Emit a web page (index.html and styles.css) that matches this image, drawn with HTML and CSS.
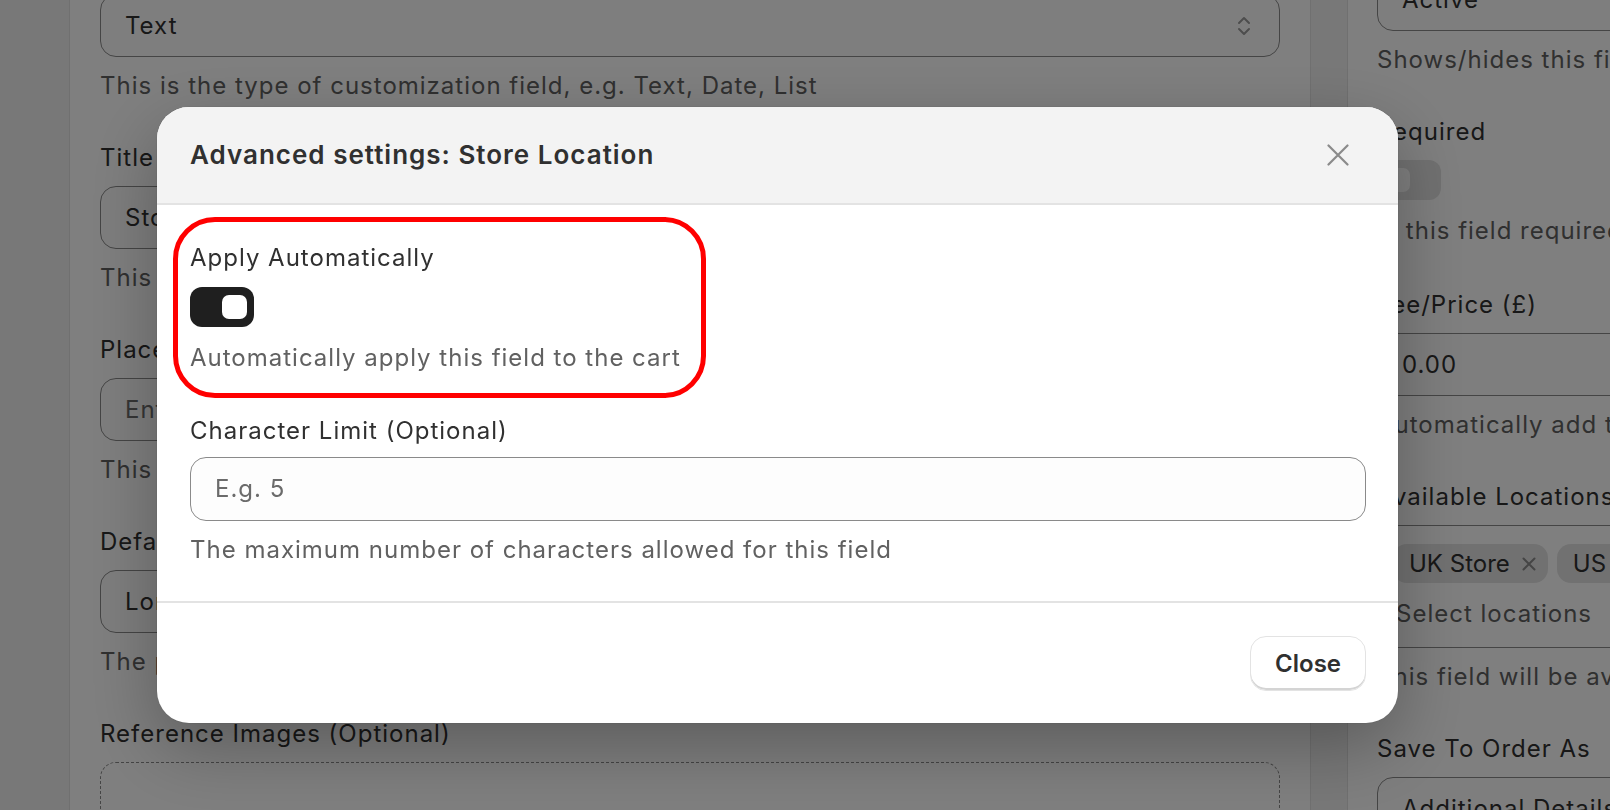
FILE: index.html
```html
<!DOCTYPE html>
<html lang="en">
<head>
<meta charset="utf-8">
<title>Advanced settings: Store Location</title>
<link rel="stylesheet" href="styles.css">
</head>
<body>
<div class="page">
  <section class="card card-main">
    <div class="field">
      <div class="label">Field Type</div>
      <div class="control select"><span>Text</span>
        <svg class="chev" width="16" height="24" viewBox="0 0 16 24"><path d="M3 9 L8 4 L13 9 M3 15 L8 20 L13 15" fill="none" stroke="#9a9a9a" stroke-width="2" stroke-linecap="round" stroke-linejoin="round"/></svg>
      </div>
      <div class="help">This is the type of customization field, e.g. Text, Date, List</div>
    </div>
    <div class="field">
      <div class="label">Title</div>
      <div class="control"><span>Store Location</span></div>
      <div class="help">This is the title shown to customers</div>
    </div>
    <div class="field">
      <div class="label">Placeholder (Optional)</div>
      <div class="control"><span class="ph">Enter a placeholder</span></div>
      <div class="help">This text is shown inside the empty field</div>
    </div>
    <div class="field">
      <div class="label">Default Value (Optional)</div>
      <div class="control"><span>London</span></div>
      <div class="help">The pre-filled value for this field</div>
    </div>
    <div class="field">
      <div class="label">Reference Images (Optional)</div>
      <div class="dropzone"></div>
    </div>
  </section>

  <aside class="card card-side">
    <div class="field">
      <div class="label">Status</div>
      <div class="control"><span>Active</span></div>
      <div class="help">Shows/hides this field on the storefront</div>
    </div>
    <div class="field">
      <div class="label">Required</div>
      <div class="toggle toggle-off"><span class="knob"></span></div>
      <div class="help help-toggle">Is this field required?</div>
    </div>
    <div class="field field-fee">
      <div class="label">Fee/Price (£)</div>
      <div class="control"><span>0.00</span></div>
      <div class="help">Automatically add this fee to the cart</div>
    </div>
    <div class="field">
      <div class="label">Available Locations</div>
      <div class="multi">
        <div class="chips">
          <span class="chip">UK Store <svg class="x" width="14" height="14" viewBox="0 0 14 14"><path d="M1.5 1.5 L12.5 12.5 M12.5 1.5 L1.5 12.5" stroke="#8a8a8a" stroke-width="2" stroke-linecap="round"/></svg></span>
          <span class="chip">US Store <svg class="x" width="14" height="14" viewBox="0 0 14 14"><path d="M1.5 1.5 L12.5 12.5 M12.5 1.5 L1.5 12.5" stroke="#8a8a8a" stroke-width="2" stroke-linecap="round"/></svg></span>
        </div>
        <div class="multi-input">Select locations</div>
      </div>
      <div class="help">This field will be available at the selected locations</div>
    </div>
    <div class="field">
      <div class="label">Save To Order As</div>
      <div class="control"><span>Additional Details</span></div>
    </div>
  </aside>
</div>

<div class="overlay"></div>

<div class="modal" role="dialog" aria-label="Advanced settings: Store Location">
  <header class="modal-header">
    <h2 class="modal-title">Advanced settings: Store Location</h2>
    <button class="close-x" aria-label="Close">
      <svg width="22" height="22" viewBox="0 0 22 22"><path d="M1.5 1.5 L20.5 20.5 M20.5 1.5 L1.5 20.5" stroke="#8a8a8a" stroke-width="2.2" stroke-linecap="round"/></svg>
    </button>
  </header>
  <div class="modal-body">
    <div class="annotation"></div>
    <div class="m-label">Apply Automatically</div>
    <div class="toggle toggle-on"><span class="knob"></span></div>
    <div class="m-desc">Automatically apply this field to the cart</div>
    <div class="m-label m-label-2">Character Limit (Optional)</div>
    <div class="m-input"><span class="ph">E.g. 5</span></div>
    <div class="m-help">The maximum number of characters allowed for this field</div>
  </div>
  <footer class="modal-footer">
    <button class="btn">Close</button>
  </footer>
</div>
</body>
</html>
```

FILE: styles.css
```css
html, body {
  margin: 0;
  height: 810px;
  overflow: hidden;
}
body {
  font-family: Inter, "Noto Sans", "Liberation Sans", sans-serif;
  font-size: 24px;
  line-height: 32px;
  letter-spacing: 1px;
  color: #303030;
  background: #f1f1f1;
}

/* ---------- background page ---------- */
.page {
  display: grid;
  grid-template-columns: 1242px 640px;
  column-gap: 36px;
  padding-left: 69px;
  margin-top: -80px;
  align-items: start;
}
.card {
  background: #ffffff;
  border: 1px solid #e0e0e0;
  border-radius: 24px;
  box-sizing: border-box;
  min-height: 1000px;
}
.card-main {
  padding: 29px 30px 40px;
}
.card-side {
  padding: 3px 29px 40px;
}
.field {
  display: flex;
  flex-direction: column;
  white-space: nowrap;
}
.field + .field {
  margin-top: 40px;
}
.field-fee.field {
  margin-top: 42px;
}
.label {
  margin-bottom: 12px;
}
.control {
  height: 63px;
  box-sizing: border-box;
  border: 1px solid #8a8a8a;
  border-radius: 16px;
  background: #fdfdfd;
  padding: 0 24px;
  display: flex;
  align-items: center;
  justify-content: space-between;
}
.select .chev {
  margin-right: 3px;
}
.ph {
  color: #6b6b6b;
}
.help {
  margin-top: 13px;
  color: #616161;
}
.help-toggle {
  margin-top: 15px;
}
.dropzone {
  height: 180px;
  border: 1px dashed #8a8a8a;
  border-radius: 16px;
}

.toggle {
  width: 64px;
  height: 40px;
  box-sizing: border-box;
  border-radius: 12px;
  display: flex;
  align-items: center;
  padding: 0 7px;
}
.toggle .knob {
  width: 25px;
  height: 24px;
  border-radius: 7px;
  background: #ffffff;
}
.toggle-on {
  background: #1f1f1f;
  justify-content: flex-end;
}
.toggle-off {
  background: #e3e3e3;
  justify-content: flex-start;
  padding-left: 8px;
}

.multi {
  border: 1px solid #8a8a8a;
  border-radius: 16px;
  padding: 18px 16px 17px 15px;
}
.chips {
  display: flex;
  gap: 9px;
}
.chip {
  height: 39px;
  border-radius: 14px;
  background: #e3e3e3;
  display: inline-flex;
  align-items: center;
  padding: 0 12px 0 16px;
  gap: 12px;
  color: #303030;
  letter-spacing: 0;
}
.multi-input {
  margin-top: 15px;
  color: #616161;
  padding-left: 3px;
}

/* ---------- modal ---------- */
.overlay {
  position: fixed;
  inset: 0;
  background: rgba(0, 0, 0, 0.5);
}
.modal {
  position: fixed;
  left: 157px;
  top: 107px;
  width: 1241px;
  background: #ffffff;
  border-radius: 32px;
  overflow: hidden;
  box-shadow: 0 24px 70px rgba(0, 0, 0, 0.28), 0 0 0 1px rgba(0, 0, 0, 0.04);
}
.modal-header {
  height: 96px;
  background: #f3f3f3;
  border-bottom: 2px solid #e3e3e3;
  display: flex;
  align-items: center;
  justify-content: space-between;
  padding: 0 49px 0 33px;
}
.modal-title {
  margin: 0;
  font-size: 26px;
  line-height: 32px;
  font-weight: 600;
  letter-spacing: 1px;
  color: #303030;
}
.close-x {
  width: 22px;
  height: 22px;
  padding: 0;
  border: 0;
  background: transparent;
  display: flex;
}
.modal-body {
  position: relative;
  padding: 37px 32px 35px 33px;
  display: flex;
  flex-direction: column;
  align-items: flex-start;
}
.annotation {
  position: absolute;
  left: 16px;
  top: 12px;
  width: 533px;
  height: 181px;
  box-sizing: border-box;
  border: 5px solid #ff0000;
  border-radius: 42px;
  pointer-events: none;
}
.modal-body .toggle {
  margin-top: 13px;
}
.m-desc {
  margin-top: 15px;
  color: #616161;
}
.m-label-2 {
  margin-top: 41px;
}
.m-input {
  margin-top: 10px;
  align-self: stretch;
  height: 64px;
  box-sizing: border-box;
  border: 1px solid #8a8a8a;
  border-radius: 16px;
  background: #fdfdfd;
  padding: 0 24px;
  display: flex;
  align-items: center;
}
.m-help {
  margin-top: 13px;
  color: #616161;
}
.modal-footer {
  border-top: 2px solid #e3e3e3;
  padding: 33px 32px 32px;
  display: flex;
  justify-content: flex-end;
}
.btn {
  height: 55px;
  box-sizing: border-box;
  padding: 0 24px;
  font-family: inherit;
  font-size: 24px;
  font-weight: 600;
  letter-spacing: 0;
  color: #303030;
  background: #ffffff;
  border: 1px solid #e3e3e3;
  border-radius: 16px;
  box-shadow: inset 0 -2px 0 #d4d4d4;
}
```
